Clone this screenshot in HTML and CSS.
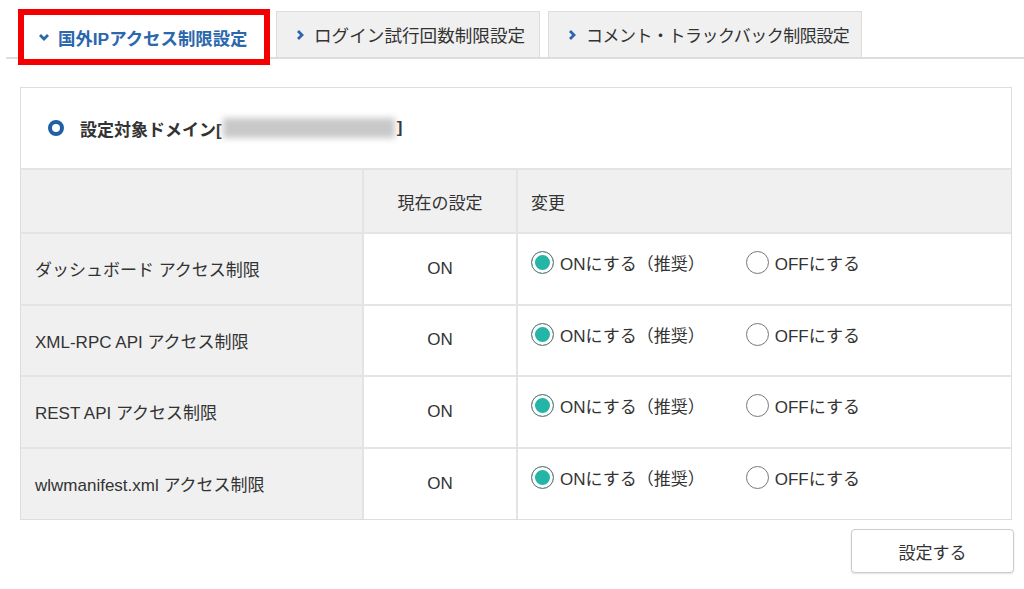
FILE: index.html
```html
<!DOCTYPE html>
<html lang="ja">
<head>
  <meta charset="UTF-8" />
  <title>アクセス制限設定</title>
  <link rel="stylesheet" href="styles.css">
</head>
<body>

  <div class="tabs">
    <div class="tab active">
      <svg class="chev" width="12" height="12" viewBox="0 0 12 12"><path d="M2 4 L6 8 L10 4" fill="none" stroke="#2a67ad" stroke-width="2.8"/></svg>
      国外IPアクセス制限設定
    </div>
    <div class="tab tab-login">
      <svg class="chev" width="12" height="12" viewBox="0 0 12 12"><path d="M4 2 L8 6 L4 10" fill="none" stroke="#2a67ad" stroke-width="2.8"/></svg>
      ログイン試行回数制限設定
    </div>
    <div class="tab tab-comment">
      <svg class="chev" width="12" height="12" viewBox="0 0 12 12"><path d="M4 2 L8 6 L4 10" fill="none" stroke="#2a67ad" stroke-width="2.8"/></svg>
      コメント・トラックバック制限設定
    </div>
  </div>

  <div class="panel">
    <div class="panel-head">
      <span class="ring"></span>
      <span class="domain">設定対象ドメイン[<span class="blur"></span>]</span>
    </div>

    <table class="settings">
      <tr class="head">
        <th class="c1"></th>
        <th class="c2">現在の設定</th>
        <th class="c3">変更</th>
      </tr>
      <tr>
        <td class="c1">ダッシュボード アクセス制限</td>
        <td class="c2">ON</td>
        <td class="c3">
          <label class="radio"><span class="dot on"></span>ONにする（推奨）</label>
          <label class="radio"><span class="dot"></span>OFFにする</label>
        </td>
      </tr>
      <tr>
        <td class="c1">XML-RPC API アクセス制限</td>
        <td class="c2">ON</td>
        <td class="c3">
          <label class="radio"><span class="dot on"></span>ONにする（推奨）</label>
          <label class="radio"><span class="dot"></span>OFFにする</label>
        </td>
      </tr>
      <tr>
        <td class="c1">REST API アクセス制限</td>
        <td class="c2">ON</td>
        <td class="c3">
          <label class="radio"><span class="dot on"></span>ONにする（推奨）</label>
          <label class="radio"><span class="dot"></span>OFFにする</label>
        </td>
      </tr>
      <tr>
        <td class="c1">wlwmanifest.xml アクセス制限</td>
        <td class="c2">ON</td>
        <td class="c3">
          <label class="radio"><span class="dot on"></span>ONにする（推奨）</label>
          <label class="radio"><span class="dot"></span>OFFにする</label>
        </td>
      </tr>
    </table>
  </div>

  <div class="actions">
    <button class="submit">設定する</button>
  </div>

  <div class="next"></div>

</body>
</html>
```

FILE: styles.css
```css
body {
  margin: 0;
  background: #fff;
  color: #333;
  font-family: "Liberation Sans", "Noto Sans CJK JP", sans-serif;
  font-size: 17px;
}

.tabs {
  display: flex;
  align-items: flex-end;
  margin-left: 6px;
  padding: 9px 0 0 12px;
  border-bottom: 2px solid #ddd;
}

.tab {
  display: flex;
  align-items: center;
  gap: 8px;
  height: 46px;
  box-sizing: border-box;
  padding: 0 0 0 17px;
  margin-right: 8px;
  background: #f0f0f0;
  border: 1px solid #ddd;
  border-bottom: none;
  white-space: nowrap;
}

.tab-login {
  width: 264px;
  font-size: 17.6px;
}

.tab-comment {
  width: 314px;
  letter-spacing: -0.5px;
}

.tab.active {
  position: relative;
  z-index: 1;
  width: 252px;
  height: 56px;
  margin: 0 6px -8px 0;
  padding: 0 0 0 14px;
  background: #fff;
  border: 6px solid #f50000;
  color: #2a67ad;
  font-size: 17.4px;
  font-weight: bold;
}

.chev {
  flex: none;
}

.panel {
  margin: 28px 12px 0 20px;
  border: 1px solid #ddd;
}

.panel-head {
  display: flex;
  align-items: center;
  height: 80px;
  padding-left: 27px;
  gap: 16px;
  box-sizing: border-box;
}

.ring {
  width: 16px;
  height: 16px;
  box-sizing: border-box;
  border: 4px solid #1f5fa6;
  border-radius: 50%;
}

.domain {
  display: flex;
  align-items: center;
  font-weight: bold;
}

.blur {
  display: inline-block;
  width: 172px;
  height: 20px;
  margin: 0 2px 0 1px;
  background: #c8c8c8;
  filter: blur(3px);
}

.settings {
  width: 100%;
  border-collapse: collapse;
}

.settings th,
.settings td {
  border-top: 2px solid #e4e4e4;
  font-weight: normal;
  padding: 0;
}

.settings tr {
  height: 71.5px;
}

.settings tr.head {
  height: 64px;
}

.settings tr.head th {
  background: #f0f0f0;
}

.settings .c1 {
  width: 342px;
  background: #f0f0f0;
  text-align: left;
  padding-left: 14px;
  box-sizing: border-box;
}

.settings .c2 {
  width: 152px;
  text-align: center;
  border-left: 2px solid #e4e4e4;
  border-right: 2px solid #e4e4e4;
}

.settings .c3 {
  text-align: left;
  padding-left: 13px;
}

.settings td.c3 {
  padding-bottom: 8px;
}

.radio {
  display: inline-flex;
  align-items: center;
  gap: 6px;
  width: 210px;
}

.dot {
  width: 23px;
  height: 23px;
  box-sizing: border-box;
  border: 1.5px solid #777;
  border-radius: 50%;
  background: #fff;
}

.dot.on {
  background: #25b5a6;
  box-shadow: inset 0 0 0 3px #fff;
}

.actions {
  display: flex;
  justify-content: flex-end;
  padding: 9px 10px 0 0;
}

.submit {
  width: 163px;
  height: 44px;
  background: #fff;
  border: 1px solid #ccc;
  border-radius: 4px;
  box-shadow: 0 1px 2px rgba(0, 0, 0, 0.12);
  font-family: inherit;
  font-size: 17px;
  color: #333;
}

.next {
  margin: 16px 0 0 20px;
  height: 10px;
  background: #f5fbff;
}
```
